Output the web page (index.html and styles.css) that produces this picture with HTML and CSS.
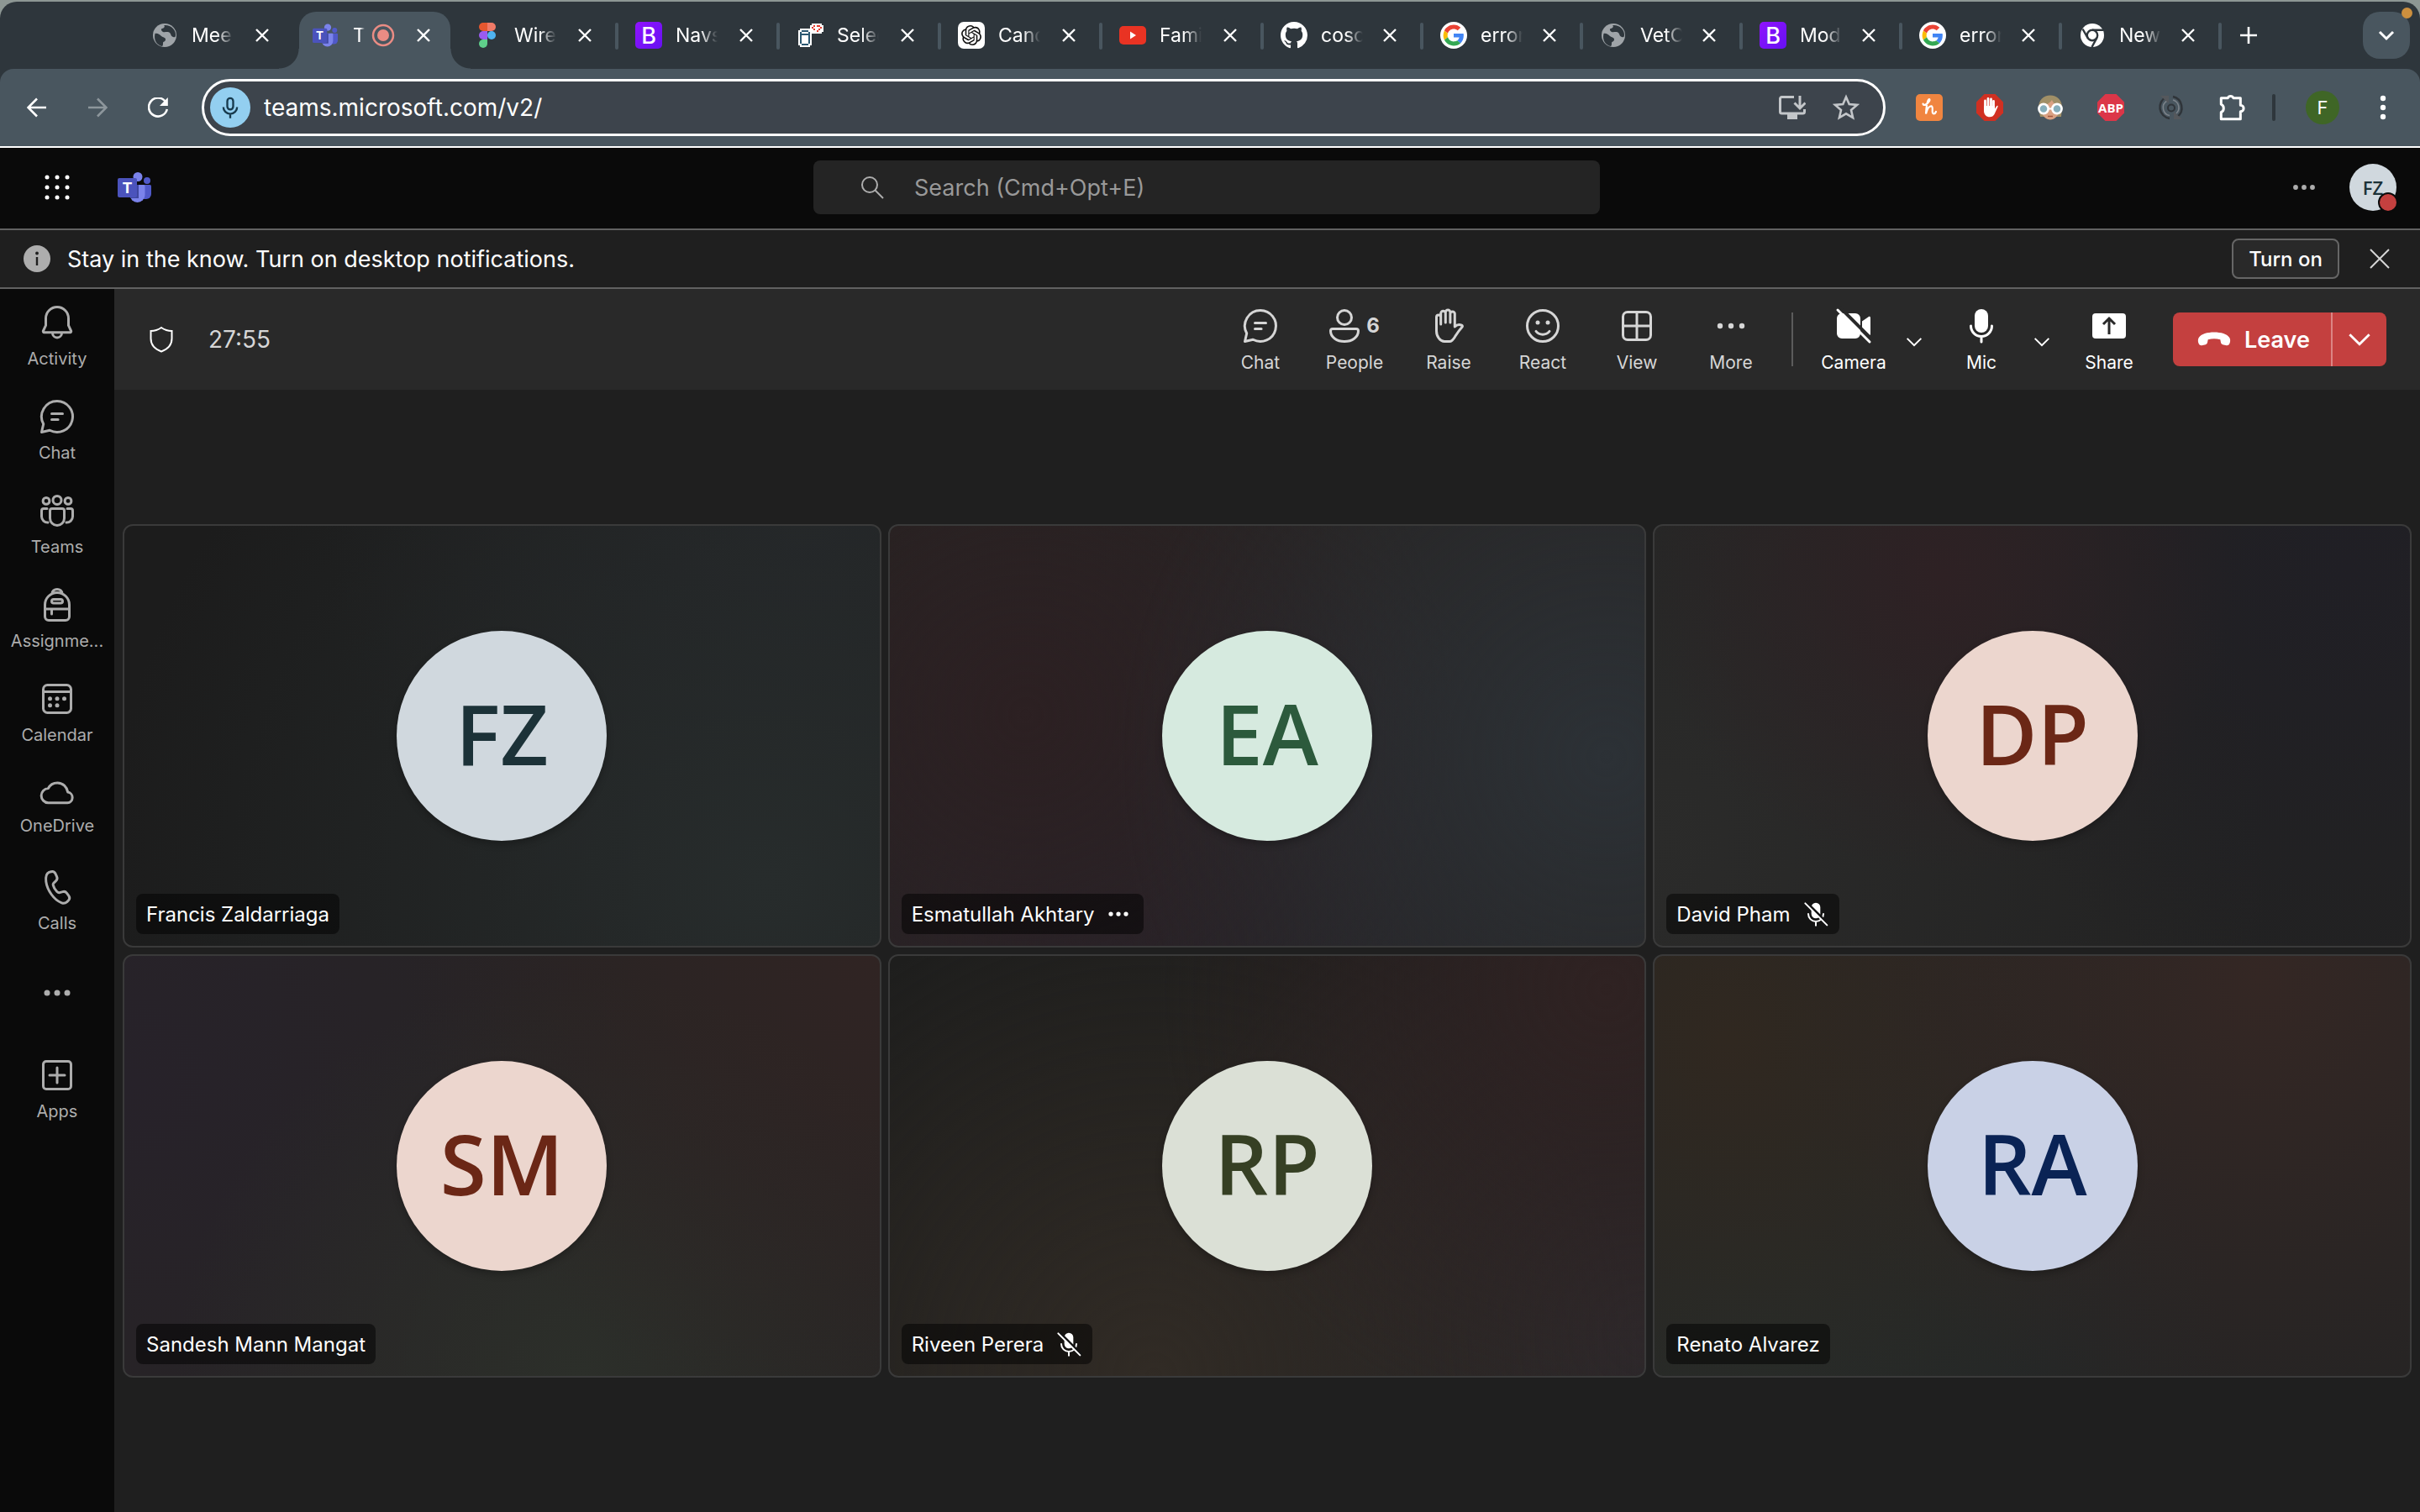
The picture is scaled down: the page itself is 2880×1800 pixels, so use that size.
FILE: index.html
```html
<!DOCTYPE html>
<html lang="en">
<head>
<meta charset="utf-8">
<title>Meeting | Microsoft Teams</title>
<link rel="stylesheet" href="styles.css">
</head>
<body>
<svg class="sprite" aria-hidden="true">
  <linearGradient id="bs" x1="0" y1="0" x2="1" y2="1"><stop offset="0" stop-color="#9013fe"/><stop offset="1" stop-color="#6610f2"/></linearGradient>
  <symbol id="x" viewBox="0 0 16 16"><path d="M1 1l14 14M15 1L1 15" fill="none" stroke="currentColor" stroke-width="2.4"/></symbol>
  <symbol id="x-thin" viewBox="0 0 24 24"><path d="M1 1l22 22M23 1L1 23" fill="none" stroke="currentColor" stroke-width="2"/></symbol>
  <symbol id="chev" viewBox="0 0 24 24"><path d="M2 7l10 10L22 7" fill="none" stroke="currentColor" stroke-width="2.4"/></symbol>
  <symbol id="dots" viewBox="0 0 24 24"><g fill="currentColor"><circle cx="6" cy="12" r="1.75"/><circle cx="12" cy="12" r="1.75"/><circle cx="18" cy="12" r="1.75"/></g></symbol>
  <symbol id="globe" viewBox="0 0 32 32"><circle cx="16" cy="16" r="14" fill="#9fa4a8"/><path d="M4.500 14C7 13 10 15 12 17s5 1 5 4-3 2-3 4 0 3-1 4C7 28 2.500 22 4.500 14zM15 4c2 1 0 4-2 4s-1 3 1 4 6-1 8 1 1 4 4 5 3-1 3-3C29 9 23 3 15 4z" fill="#2e363c"/></symbol>
  <symbol id="teams" viewBox="0 0 40 40"><circle cx="35" cy="12" r="4" fill="#5059c9"/><path d="M28 17h10.500a1.500 1.500 0 0 1 1.500 1.500V28a6 6 0 0 1-6 6h-6z" fill="#5059c9"/><circle cx="24" cy="7.500" r="5.500" fill="#7b83eb"/><path d="M16 17h15a1.500 1.500 0 0 1 1.500 1.500V29a9 9 0 0 1-18 0V18.500A1.500 1.500 0 0 1 16 17z" fill="#7b83eb"/><path d="M14.500 17H25v16H15.500a9 9 0 0 1-1-4z" fill="#3f479f"/><rect x="0" y="9" width="23" height="23" rx="2" fill="#4b53bc"/></symbol>
  <symbol id="google" viewBox="-7 -7 62 62"><circle cx="24" cy="24" r="31" fill="#fff"/><path fill="#ea4335" d="M24 9.500c3.540 0 6.710 1.220 9.210 3.600l6.850-6.850C35.900 2.380 30.470 0 24 0 14.620 0 6.510 5.380 2.560 13.220l7.980 6.190C12.430 13.720 17.740 9.500 24 9.500z"/><path fill="#4285f4" d="M46.980 24.550c0-1.570-.15-3.090-.38-4.550H24v9.020h12.940c-.58 2.960-2.260 5.480-4.780 7.180l7.730 6c4.510-4.180 7.090-10.360 7.090-17.650z"/><path fill="#fbbc05" d="M10.530 28.590c-.48-1.450-.76-2.990-.76-4.590s.27-3.140.76-4.590l-7.980-6.190C.92 16.460 0 20.120 0 24c0 3.880.92 7.540 2.560 10.780l7.970-6.190z"/><path fill="#34a853" d="M24 48c6.480 0 11.930-2.130 15.890-5.810l-7.730-6c-2.150 1.450-4.920 2.300-8.160 2.300-6.260 0-11.570-4.220-13.470-9.910l-7.980 6.190C6.510 42.620 14.620 48 24 48z"/></symbol>
  <symbol id="chat" viewBox="0 0 24 24"><path class="ln" d="M12 2.750a9.250 9.250 0 1 1-4.400 17.400L2.750 21.250l1.100-4.850A9.250 9.250 0 0 1 12 2.750zM8.750 10.250h6.500M8.750 13.750h3.800"/></symbol>
  <symbol id="mic-off" viewBox="0 0 24 24"><path d="M8 6a4 4 0 0 1 8 0v6a4 4 0 0 1-8 0z" fill="currentColor"/><path class="ln" d="M5.250 12a6.750 6.750 0 0 0 13.500 0M12 18.750v3.500"/><path d="M3.600 1.600l20 20" stroke="#141414" stroke-width="2.200"/><path class="ln" d="M2.500 2.500l19.500 19.500"/></symbol>
</svg>

<header class="browser">
  <div class="strip">
    <div class="tabs">
      <div class="tab"><svg class="fav"><use href="#globe"/></svg><span class="title">Mee</span><button class="close" aria-label="Close tab"><svg><use href="#x"/></svg></button></div>
      <div class="tab active"><svg class="fav" viewBox="0 0 40 40"><use href="#teams"/><text x="11.500" y="27" text-anchor="middle" font-size="18" font-weight="700" fill="#fff">T</text></svg><span class="title">T</span><svg class="rec" viewBox="0 0 28 28"><circle cx="14" cy="14" r="12" fill="none" stroke="#ea8c84" stroke-width="2.500"/><circle cx="14" cy="14" r="7" fill="#ea8c84"/></svg><button class="close" aria-label="Close tab"><svg><use href="#x"/></svg></button></div>
      <div class="tab"><svg class="fav" viewBox="0 0 32 32"><path d="M11 1h5v10h-5a5 5 0 0 1 0-10z" fill="#e5572f"/><path d="M16 1h5a5 5 0 0 1 0 10h-5z" fill="#f07a67"/><path d="M11 11h5v10h-5a5 5 0 0 1 0-10z" fill="#9a5bf0"/><circle cx="21" cy="16" r="5" fill="#4fb3f0"/><path d="M11 21h5v5a5 5 0 1 1-5-5z" fill="#5fcf8b"/></svg><span class="title">Wire</span><button class="close" aria-label="Close tab"><svg><use href="#x"/></svg></button></div>
      <div class="tab sep"><svg class="fav" viewBox="0 0 32 32"><rect width="32" height="32" rx="5" fill="url(#bs)"/><text x="16" y="26" text-anchor="middle" font-size="27" font-weight="500" fill="#fff">B</text></svg><span class="title">Navs</span><button class="close" aria-label="Close tab"><svg><use href="#x"/></svg></button></div>
      <div class="tab sep"><svg class="fav" viewBox="0 0 32 32" shape-rendering="crispEdges"><path d="M4 8h12v2h2v18h-2v2H4v-2H2V10h2z" fill="#fff"/><path d="M16 4h2V2h12v2h2v8h-2v2H18v-2h-2z" fill="#fff"/><path d="M6 10h8v2H6zM4 12h2v14H4zM14 12h2v14h-2zM6 14h8v2H6zM6 26h8v2H6z" fill="#2b5872"/><path d="M20 4h2v2h-2zM18 6h2v2h-2zM20 8h2v2h-2zM24 4h4v2h-4zM28 6h2v2h-2zM26 8h2v2h-2zM24 10h2v2h-2z" fill="#e23a2e"/></svg><span class="title">Selec</span><button class="close" aria-label="Close tab"><svg><use href="#x"/></svg></button></div>
      <div class="tab sep"><svg class="fav" viewBox="0 0 32 32"><rect width="32" height="32" rx="7" fill="#fff"/><path transform="translate(4 4)" fill="#111" d="M22.282 9.821a5.985 5.985 0 0 0-.516-4.910 6.046 6.046 0 0 0-6.510-2.900A6.065 6.065 0 0 0 4.981 4.182a5.985 5.985 0 0 0-3.998 2.900 6.046 6.046 0 0 0 .743 7.097 5.980 5.980 0 0 0 .511 4.911 6.051 6.051 0 0 0 6.515 2.900A5.985 5.985 0 0 0 13.260 24a6.056 6.056 0 0 0 5.772-4.206 5.989 5.989 0 0 0 3.998-2.900 6.056 6.056 0 0 0-.748-7.073zm-9.022 12.608a4.476 4.476 0 0 1-2.876-1.041l.142-.080 4.778-2.758a.795.795 0 0 0 .393-.681v-6.737l2.020 1.169a.071.071 0 0 1 .038.052v5.583a4.504 4.504 0 0 1-4.495 4.494zm-9.661-4.125a4.471 4.471 0 0 1-.535-3.014l.142.085 4.783 2.758a.771.771 0 0 0 .781 0l5.843-3.369v2.332a.080.080 0 0 1-.033.062L9.740 19.950a4.499 4.499 0 0 1-6.141-1.646zM2.341 7.896a4.485 4.485 0 0 1 2.366-1.973V11.600a.766.766 0 0 0 .388.677l5.814 3.354-2.020 1.169a.076.076 0 0 1-.071 0l-4.830-2.787A4.504 4.504 0 0 1 2.341 7.872zm16.596 3.856L13.104 8.364 15.119 7.200a.076.076 0 0 1 .071 0l4.830 2.791a4.494 4.494 0 0 1-.677 8.104v-5.677a.790.790 0 0 0-.407-.667zm2.011-3.023l-.142-.085-4.774-2.782a.776.776 0 0 0-.785 0L9.409 9.230V6.897a.066.066 0 0 1 .028-.062l4.830-2.787a4.499 4.499 0 0 1 6.680 4.660zM8.307 12.863l-2.020-1.164a.080.080 0 0 1-.038-.057V6.074a4.499 4.499 0 0 1 7.376-3.454l-.142.081L8.704 5.459a.795.795 0 0 0-.393.681zm1.098-2.365l2.602-1.500 2.607 1.500v2.999l-2.597 1.500-2.607-1.500z"/></svg><span class="title">Cand</span><button class="close" aria-label="Close tab"><svg><use href="#x"/></svg></button></div>
      <div class="tab sep"><svg class="fav" viewBox="0 0 32 32"><rect y="5" width="32" height="22" rx="5" fill="#e93323"/><path d="M13 11.500v9l7-4.500z" fill="#fff"/></svg><span class="title">Fami</span><button class="close" aria-label="Close tab"><svg><use href="#x"/></svg></button></div>
      <div class="tab narrow sep"><svg class="fav" viewBox="0 0 16 16"><path fill="#fff" d="M8 0C3.580 0 0 3.580 0 8c0 3.540 2.290 6.530 5.470 7.590.4.070.55-.17.55-.38 0-.19-.01-.82-.01-1.490-2.010.37-2.530-.49-2.690-.94-.09-.23-.48-.94-.82-1.130-.28-.15-.68-.52-.01-.53.63-.01 1.080.58 1.230.82.72 1.210 1.870.87 2.330.66.070-.52.28-.87.51-1.070-1.780-.2-3.640-.89-3.640-3.950 0-.87.31-1.590.82-2.150-.080-.2-.36-1.020.080-2.120 0 0 .67-.21 2.200.82.64-.18 1.320-.27 2-.27s1.360.090 2 .27c1.530-1.040 2.200-.82 2.200-.82.44 1.100.16 1.920.080 2.120.51.56.82 1.270.82 2.150 0 3.070-1.870 3.750-3.650 3.950.29.25.54.73.54 1.480 0 1.070-.010 1.930-.010 2.200 0 .21.15.46.55.38A8.010 8.010 0 0 0 16 8c0-4.420-3.580-8-8-8z"/></svg><span class="title">cosc</span><button class="close" aria-label="Close tab"><svg><use href="#x"/></svg></button></div>
      <div class="tab narrow sep"><svg class="fav"><use href="#google"/></svg><span class="title">error</span><button class="close" aria-label="Close tab"><svg><use href="#x"/></svg></button></div>
      <div class="tab narrow sep"><svg class="fav"><use href="#globe"/></svg><span class="title">VetC</span><button class="close" aria-label="Close tab"><svg><use href="#x"/></svg></button></div>
      <div class="tab narrow sep"><svg class="fav" viewBox="0 0 32 32"><rect width="32" height="32" rx="5" fill="url(#bs)"/><text x="16" y="26" text-anchor="middle" font-size="27" font-weight="500" fill="#fff">B</text></svg><span class="title">Mod</span><button class="close" aria-label="Close tab"><svg><use href="#x"/></svg></button></div>
      <div class="tab narrow sep"><svg class="fav"><use href="#google"/></svg><span class="title">error</span><button class="close" aria-label="Close tab"><svg><use href="#x"/></svg></button></div>
      <div class="tab narrow sep last"><svg class="fav" viewBox="0 0 32 32"><circle cx="16" cy="16" r="14" fill="#fff"/><circle cx="16" cy="16" r="6.200" fill="none" stroke="#2e363c" stroke-width="2.400"/><path d="M16 9.800h13M10.600 19.100L4.500 8.500M21.400 19.100L15.500 30" stroke="#2e363c" stroke-width="2.400"/></svg><span class="title">New</span><button class="close" aria-label="Close tab"><svg><use href="#x"/></svg></button></div>
    </div>
    <button class="newtab" aria-label="New tab"><svg viewBox="0 0 24 24"><path d="M12 2v20M2 12h20" stroke="currentColor" stroke-width="2.600"/></svg></button>
    <button class="tabsearch" aria-label="Search tabs"><svg viewBox="0 0 24 24"><path d="M4 8l8 8 8-8" fill="none" stroke="#fff" stroke-width="3"/></svg><span class="notice"></span></button>
  </div>

  <div class="toolbar">
    <button class="nav" aria-label="Back"><svg viewBox="0 0 24 24"><path d="M23 12H2M12 1.500L1.500 12 12 22.500" fill="none" stroke="#fff" stroke-width="2.600"/></svg></button>
    <button class="nav" aria-label="Forward"><svg viewBox="0 0 24 24"><path d="M1 12h21M12 1.500L22.500 12 12 22.500" fill="none" stroke="#8d969c" stroke-width="2.600"/></svg></button>
    <button class="nav" aria-label="Reload"><svg viewBox="0 0 24 24"><path d="M20.500 4.500A11 11 0 1 0 22.800 14" fill="none" stroke="#fff" stroke-width="2.600"/><path d="M23.800 0v10H14z" fill="#fff"/></svg></button>
    <div class="omnibox">
      <span class="micchip"><svg viewBox="0 0 24 24"><rect x="9" y="2.500" width="6" height="11.500" rx="3" fill="none" stroke="#173a4d" stroke-width="2"/><path d="M5 11.500a7 7 0 0 0 14 0M12 18.500V23" fill="none" stroke="#173a4d" stroke-width="2"/></svg></span>
      <input class="url" type="text" aria-label="Address" value="teams.microsoft.com/v2/">
      <button class="omni" aria-label="Install app"><svg viewBox="0 0 32 32"><path d="M18 3.500H3.500a2 2 0 0 0-2 2V21a2 2 0 0 0 2 2h25a2 2 0 0 0 2-2v-3M25 2v14M18.500 10.500l6.500 6.500 6.500-6.500" fill="none" stroke="#c3c6c9" stroke-width="3"/><path d="M10 24h12v6H10z" fill="#c3c6c9"/></svg></button>
      <button class="omni" aria-label="Bookmark"><svg viewBox="0 0 32 32"><path d="M16 3.500l3.700 8.600 9.300.8-7 6.100 2.100 9.100L16 23.300l-8.100 4.800L10 19l-7-6.100 9.300-.8z" fill="none" stroke="#c3c6c9" stroke-width="2.600"/></svg></button>
    </div>
    <div class="exts">
      <button aria-label="Honey"><svg viewBox="0 0 32 32"><rect width="32" height="32" rx="5" fill="#f08540"/><path d="M8.500 11.500c.5 3 5 1 7.500-3 1-2 .3-3-.8-2-1.700 2-2.700 9-3.200 17 1.500-6 4-9.500 6.500-9.200 3 .6-.3 8 2.200 9 1.600.4 2.700-.8 3.300-2.300" fill="none" stroke="#fff" stroke-width="2.200" stroke-linecap="round"/></svg></button>
      <button aria-label="AdBlock"><svg viewBox="0 0 32 32"><path d="M9.500 0h13L32 9.500v13L22.500 32h-13L0 22.500v-13z" fill="#d03022"/><path d="M10.500 16V8M14 15V5.500M17.500 15V6M20.500 16V8.500" stroke="#fff" stroke-width="2.800" stroke-linecap="round"/><path d="M9 14h13v3.500l2-3c1-1.200 2-.6 1.500.7L21.500 24c-1 2-3 3.300-5.500 3.300-4 0-7-2.800-7-7.300z" fill="#fff"/></svg></button>
      <button aria-label="Extension"><svg viewBox="0 0 32 32"><path d="M2 16C2 7 8 1.500 16 1.500S30 7 30 16l-1 11H4z" fill="#a08f67"/><path d="M6 14c6-1 10-4 12-7 1 3 4 6 8 7v6c0 6-5 10.500-10 10.500S6 26 6 20z" fill="#d9a183"/><circle cx="8" cy="17.500" r="5.600" fill="#86aebb" stroke="#fff" stroke-width="2.600"/><circle cx="24" cy="17.500" r="5.600" fill="#86aebb" stroke="#fff" stroke-width="2.600"/><path d="M13.500 17.500h5" stroke="#fff" stroke-width="2"/><path d="M13 26.500h6" stroke="#a5583f" stroke-width="1.500"/></svg></button>
      <button aria-label="Adblock Plus"><svg viewBox="0 0 32 32"><path d="M9.500 0h13L32 9.500v13L22.500 32h-13L0 22.500v-13z" fill="#dc3648"/><text class="abp" x="16" y="21.500" text-anchor="middle" font-size="15" font-weight="700" fill="#fff">ABP</text></svg></button>
      <button aria-label="Extension"><svg viewBox="0 0 32 32" fill="none"><path d="M10 3.500A13.500 13.500 0 0 0 14 29M18 3a13.500 13.500 0 0 1 5 24" stroke="#2f3439" stroke-width="2.400"/><path d="M11 8a9.500 9.500 0 0 0 3 17.500M18 7a9.500 9.500 0 0 1 4 16" stroke="#7c838a" stroke-width="1.500"/><path d="M3 2h10v9zM29 30H19v-9z" fill="#55585c"/><circle cx="16" cy="16.500" r="4" stroke="#2f3439" stroke-width="2"/></svg></button>
      <button aria-label="Extensions"><svg viewBox="0 0 34 34"><path d="M3.500 5h8.500a3.800 3.800 0 0 1 7 0h9v9a4 4 0 0 1 0 8v9.500H3.500V23a5.500 5.500 0 0 0 0-10z" fill="none" stroke="#fff" stroke-width="3.200" stroke-linejoin="round"/></svg></button>
      <span class="bar"></span>
      <button class="profile" aria-label="Profile">F</button>
      <button aria-label="Menu"><svg viewBox="0 0 32 32"><g fill="#fff"><circle cx="16" cy="5" r="3.200"/><circle cx="16" cy="16" r="3.200"/><circle cx="16" cy="27" r="3.200"/></g></svg></button>
    </div>
  </div>
</header>

<header class="apphead">
  <div class="brand">
    <button class="waffle" aria-label="App launcher"><svg viewBox="0 0 32 32"><g fill="#fff"><circle cx="4" cy="4" r="2.500"/><circle cx="16" cy="4" r="2.500"/><circle cx="28" cy="4" r="2.500"/><circle cx="4" cy="16" r="2.500"/><circle cx="16" cy="16" r="2.500"/><circle cx="28" cy="16" r="2.500"/><circle cx="4" cy="28" r="2.500"/><circle cx="16" cy="28" r="2.500"/><circle cx="28" cy="28" r="2.500"/></g></svg></button>
    <svg class="logo" viewBox="0 0 40 40"><use href="#teams"/><text x="11.500" y="27" text-anchor="middle" font-size="18" font-weight="700" fill="#fff">T</text></svg>
  </div>
  <label class="search"><svg viewBox="0 0 28 28"><circle cx="11" cy="11" r="9" fill="none" stroke="#adadad" stroke-width="2"/><path d="M17.500 17.500L27 27" stroke="#adadad" stroke-width="2"/></svg><input type="search" aria-label="Search" placeholder="Search (Cmd+Opt+E)"></label>
  <div class="account">
    <button class="more" aria-label="Settings and more"><svg><use href="#dots"/></svg></button>
    <button class="me" aria-label="Account">FZ<span class="presence"></span></button>
  </div>
</header>

<div class="banner">
  <svg class="info" viewBox="0 0 32 32"><circle cx="16" cy="16" r="16" fill="#adadad"/><path d="M16 14v10" stroke="#1f1f1f" stroke-width="2.400"/><circle cx="16" cy="9.500" r="1.900" fill="#1f1f1f"/></svg>
  <p>Stay in the know. Turn on desktop notifications.</p>
  <button class="turnon">Turn on</button>
  <button class="dismiss" aria-label="Dismiss"><svg><use href="#x-thin"/></svg></button>
</div>

<div class="app">
  <nav class="rail">
    <a href="#activity"><svg viewBox="0 0 24 24"><path class="ln" d="M12 2.750A6.750 6.750 0 0 0 5.250 9.500v4.200L3.700 17a.600.600 0 0 0 .55.85h15.500a.600.600 0 0 0 .55-.85l-1.550-3.300V9.500A6.750 6.750 0 0 0 12 2.750zM9.250 18.200a2.750 2.750 0 0 0 5.500 0"/></svg>Activity</a>
    <a href="#chat-list"><svg><use href="#chat"/></svg>Chat</a>
    <a href="#teams-list"><svg viewBox="0 0 24 24"><g class="ln"><circle cx="12" cy="5.700" r="2.500"/><circle cx="5.500" cy="6.200" r="1.950"/><circle cx="18.500" cy="6.200" r="1.950"/><path d="M9 10.750h6c.7 0 1.250.55 1.250 1.250v4.500a4.250 4.250 0 0 1-8.500 0V12c0-.7.55-1.250 1.250-1.250zM6 10.750H4c-.7 0-1.250.55-1.250 1.250v3.500A3.600 3.600 0 0 0 6.500 19M18 10.750h2c.7 0 1.250.55 1.250 1.250v3.500A3.600 3.600 0 0 1 17.500 19"/></g></svg>Teams</a>
    <a href="#assignments"><svg viewBox="0 0 24 24"><g class="ln"><path d="M4.750 12a7.250 7.250 0 0 1 14.500 0v7A2.250 2.250 0 0 1 17 21.250H7A2.250 2.250 0 0 1 4.750 19zM9 5.300a3 2.600 0 0 1 6 0M4.750 14.500h14.500M8.750 14.500v3"/><rect x="8.750" y="8.700" width="6.500" height="2.300" rx="1.150"/></g></svg>Assignme...</a>
    <a href="#calendar"><svg viewBox="0 0 24 24"><path class="ln" d="M6.250 3.750h11.500a2.500 2.500 0 0 1 2.500 2.500v11.500a2.500 2.500 0 0 1-2.500 2.500H6.250a2.500 2.500 0 0 1-2.500-2.500V6.250a2.500 2.500 0 0 1 2.500-2.500zM3.750 7.750h16.500"/><g fill="currentColor"><circle cx="7.750" cy="11.900" r="1.250"/><circle cx="12" cy="11.900" r="1.250"/><circle cx="16.250" cy="11.900" r="1.250"/><circle cx="7.750" cy="15.900" r="1.250"/><circle cx="12" cy="15.900" r="1.250"/></g></svg>Calendar</a>
    <a href="#onedrive" class="tight"><svg viewBox="0 0 24 24"><path class="ln" d="M6.700 17.900h11.400a3.200 3.200 0 0 0 .300-6.350c-.600-3.200-3-5.600-6.200-5.600-2.500 0-4.500 1.300-5.500 3.300a4.330 4.330 0 0 0 0 8.650z"/></svg>OneDrive</a>
    <a href="#calls"><svg viewBox="0 0 24 24"><path class="ln" d="M7.200 3.200l1.200-.35a2.200 2.200 0 0 1 2.600 1.200l.8 1.800a2.200 2.200 0 0 1-.5 2.500L9.900 9.700c-.3.300-.4.700-.3 1.100.3 1.300 1.200 2.800 2.200 3.800.6.600 1.100.9 1.700.7l1.800-.5a2.200 2.200 0 0 1 2.400.8l1.200 1.600a2.200 2.200 0 0 1-.2 2.800l-.8.800c-.9.800-2.100 1-3.200.6-4.600-1.600-8.600-7.600-9.300-12.600-.3-2.500.2-4.900 1.800-5.600z"/></svg>Calls</a>
    <button aria-label="More apps"><svg><use href="#dots"/></svg></button>
    <a href="#apps"><svg viewBox="0 0 24 24"><path class="ln" d="M5.500 3.750h13a1.750 1.750 0 0 1 1.750 1.750v13a1.750 1.750 0 0 1-1.750 1.750h-13a1.750 1.750 0 0 1-1.750-1.750v-13A1.750 1.750 0 0 1 5.500 3.750zM12 7.500v9M7.500 12h9"/></svg>Apps</a>
  </nav>

  <main class="meeting">
    <div class="controls">
      <svg class="shield" viewBox="0 0 28 32"><path d="M14 2c3.500 2.500 7.500 4 12.500 4v9c0 7.500-4.500 12.500-12.500 15.500C6 27.500 1.500 22.500 1.500 15V6C6.500 6 10.500 4.500 14 2z" fill="none" stroke="#fff" stroke-width="2"/></svg>
      <span class="clock">27:55</span>
      <div class="group">
        <button><svg><use href="#chat"/></svg>Chat</button>
        <button><span class="count"><svg class="person" viewBox="0 0 18 24"><path class="ln" d="M9 2.750a4.250 4.250 0 1 1 0 8.500 4.250 4.250 0 0 1 0-8.500zM2 13.750h14c.7 0 1.250.55 1.250 1.250 0 3.600-3.600 6.250-8.250 6.250S.75 18.600.75 15c0-.7.55-1.250 1.250-1.250z"/></svg>6</span>People</button>
        <button><svg viewBox="0 0 24 24"><path class="ln" d="M4.750 15V6.750a1.300 1.300 0 0 1 2.600 0V11M7.350 10.500V4.500a1.400 1.400 0 0 1 2.800 0V10M10.150 10V3.900a1.400 1.400 0 0 1 2.800 0V10M12.950 10V4.800a1.350 1.350 0 0 1 2.700 0v7.700c1.200-1.300 2.600-1.500 4.100-.9.500.2.600.6.300 1-1.900 2-3 3.700-4.200 5.700-.9 1.500-1.700 2.950-3.300 2.950H9.500c-2.600 0-4.750-3-4.750-6.300"/></svg>Raise</button>
        <button><svg viewBox="0 0 24 24"><path class="ln" d="M12 2.750a9.250 9.250 0 1 1 0 18.500 9.250 9.250 0 0 1 0-18.500zM8 15.200a5.200 5.200 0 0 0 8 0"/><circle cx="9" cy="10" r="1.250" fill="currentColor"/><circle cx="15" cy="10" r="1.250" fill="currentColor"/></svg>React</button>
        <button><svg viewBox="0 0 24 24"><path class="ln" d="M6.500 3.750h11a2.750 2.750 0 0 1 2.750 2.750v11a2.750 2.750 0 0 1-2.750 2.750h-11a2.750 2.750 0 0 1-2.750-2.750v-11A2.750 2.750 0 0 1 6.500 3.750zM12 3.750v16.500M3.750 12h16.500"/></svg>View</button>
        <button><svg viewBox="0 0 24 24"><g fill="currentColor"><circle cx="5.500" cy="12" r="1.600"/><circle cx="12" cy="12" r="1.600"/><circle cx="18.500" cy="12" r="1.600"/></g></svg>More</button>
      </div>
      <span class="divider"></span>
      <div class="devices">
        <button class="dev"><svg viewBox="0 0 24 24"><path d="M5 4.500h8a3 3 0 0 1 3 3v9a3 3 0 0 1-3 3H5a3 3 0 0 1-3-3v-9a3 3 0 0 1 3-3zM17 9.300l3.800-2.700c.6-.4 1.200-.1 1.200.6v9.600c0 .7-.6 1-1.200.6L17 14.700z" fill="currentColor"/><path d="M3.800.9l19 19" stroke="#292929" stroke-width="2"/><path class="ln" d="M2.500 2.500l19 19"/></svg>Camera</button>
        <button class="caret" aria-label="Camera options"><svg><use href="#chev"/></svg></button>
        <button class="dev"><svg viewBox="0 0 24 24"><rect x="8" y="2" width="8" height="14" rx="4" fill="currentColor"/><path class="ln" d="M5.750 12a6.250 6.250 0 0 0 12.500 0M12 18.300v3.200"/></svg>Mic</button>
        <button class="caret" aria-label="Mic options"><svg><use href="#chev"/></svg></button>
        <button class="dev"><svg viewBox="0 0 24 24"><rect x="2" y="4.500" width="20" height="15" rx="2" fill="currentColor"/><path d="M12 17V8M8.500 11L12 7.500l3.500 3.500" fill="none" stroke="#292929" stroke-width="1.500"/></svg>Share</button>
      </div>
      <div class="leave">
        <button class="hang"><svg viewBox="0 0 40 24"><path d="M20 3.500c8 0 15.500 2 18.300 6.500 1.500 2.500.8 5.600-.2 7.600-.6 1.200-2 1.900-3.400 1.600l-4.500-1c-1.200-.3-2-1.200-2.200-2.400l-.7-3.600c-4.800-1.400-9.800-1.400-14.600 0l-.7 3.600c-.2 1.200-1 2.100-2.200 2.400l-4.500 1c-1.400.3-2.800-.4-3.400-1.600-1-2-1.700-5.100-.2-7.600C4.500 5.500 12 3.500 20 3.500z" fill="#fff"/></svg>Leave</button>
        <button class="hangmore" aria-label="Leave options"><svg><use href="#chev"/></svg></button>
      </div>
    </div>

    <div class="stage">
      <div class="grid">
        <section class="tile t1"><div class="avatar">FZ</div><div class="name">Francis Zaldarriaga</div></section>
        <section class="tile t2"><div class="avatar">EA</div><div class="name">Esmatullah Akhtary<svg class="opts"><use href="#dots"/></svg></div></section>
        <section class="tile t3"><div class="avatar">DP</div><div class="name">David Pham<svg><use href="#mic-off"/></svg></div></section>
        <section class="tile t4"><div class="avatar">SM</div><div class="name">Sandesh Mann Mangat</div></section>
        <section class="tile t5"><div class="avatar">RP</div><div class="name">Riveen Perera<svg><use href="#mic-off"/></svg></div></section>
        <section class="tile t6"><div class="avatar">RA</div><div class="name">Renato Alvarez</div></section>
      </div>
    </div>
  </main>
</div>
</body>
</html>
```
FILE: styles.css
```css
* { box-sizing: border-box; }
body {
  margin: 0;
  min-height: 100vh;
  display: flex;
  flex-direction: column;
  background: #1f1f1f;
  color: #fff;
  font-family: Inter, "Liberation Sans", sans-serif;
}
button {
  margin: 0;
  padding: 0;
  border: 0;
  background: none;
  color: inherit;
  font: inherit;
}
input {
  border: 0;
  padding: 0;
  background: none;
  color: inherit;
  font: inherit;
  outline: 0;
}
p { margin: 0; }
svg { display: block; flex: none; }
.sprite { position: absolute; width: 0; height: 0; }
.ln {
  fill: none;
  stroke: currentColor;
  stroke-width: 1.5;
  stroke-linecap: round;
  stroke-linejoin: round;
}

/* browser window */
.browser {
  padding-top: 2px;
  border-bottom: 2px solid #fff;
  background: linear-gradient(#8d9794 24px, #2e363c 24px);
}
.strip {
  display: flex;
  height: 80px;
  padding: 12px 12px 0 158px;
  background: #2e363c;
  border-radius: 20px 20px 0 0;
}
.tabs { display: flex; }
.tab {
  position: relative;
  display: flex;
  align-items: center;
  width: 192px;
  height: 68px;
  padding: 0 30px 12px 22px;
  font-size: 23px;
}
.tab.narrow { width: 190px; }
.tab.sep::before,
.tab.last::after {
  content: "";
  position: absolute;
  left: -2px;
  top: 13px;
  width: 4px;
  height: 32px;
  border-radius: 2px;
  background: #49565f;
}
.tab.last::after { left: auto; right: -2px; }
.fav { width: 32px; height: 32px; }
.active .fav { width: 30px; height: 30px; margin-right: 2px; }
.title {
  width: 50px;
  margin-left: 16px;
  overflow: hidden;
  white-space: nowrap;
  -webkit-mask-image: linear-gradient(90deg, #000 60%, transparent);
  mask-image: linear-gradient(90deg, #000 60%, transparent);
}
.close { margin-left: auto; }
.close svg { width: 16px; height: 16px; }
.active {
  margin: 0 6px;
  width: 180px;
  padding: 0 24px 12px 16px;
  background: #49565f;
  border-radius: 20px 20px 0 0;
}
.active::before,
.active::after {
  content: "";
  position: absolute;
  bottom: 0;
  width: 24px;
  height: 24px;
  background: radial-gradient(circle at 0 0, transparent 23px, #49565f 24px);
}
.active::before { left: -24px; }
.active::after { right: -24px; background: radial-gradient(circle at 100% 0, transparent 23px, #49565f 24px); }
.active .title { width: 14px; }
.rec { width: 28px; height: 28px; margin-left: 8px; }
.newtab { margin-left: 22px; height: 56px; }
.newtab svg { width: 24px; height: 24px; }
.tabsearch {
  position: relative;
  display: grid;
  place-items: center;
  width: 56px;
  height: 56px;
  margin-left: auto;
  border-radius: 20px;
  background: #49565f;
}
.tabsearch svg { width: 24px; height: 24px; }
.notice {
  position: absolute;
  top: -5px;
  right: -3px;
  width: 13px;
  height: 13px;
  border-radius: 50%;
  background: #cc8f3e;
}

.toolbar {
  display: flex;
  align-items: center;
  height: 92px;
  padding: 0 28px 0 20px;
  background: #49565f;
  border-radius: 16px 16px 0 0;
}
.nav { display: grid; place-items: center; width: 48px; height: 48px; margin-right: 24px; }
.nav svg { width: 24px; height: 24px; }
.omnibox {
  flex: 1;
  display: flex;
  align-items: center;
  gap: 32px;
  height: 68px;
  margin-left: 4px;
  padding: 0 28px 0 7px;
  border: 3px solid #fff;
  border-radius: 34px;
  background: #3d444c;
}
.micchip {
  display: grid;
  place-items: center;
  width: 48px;
  height: 48px;
  border-radius: 50%;
  background: #93cff0;
}
.micchip svg { width: 28px; height: 28px; }
.url { flex: 1; margin-left: -16px; font-size: 28px; height: 56px; }
.omni svg { width: 32px; height: 32px; }
.exts { display: flex; align-items: center; gap: 40px; margin-left: 36px; }
.exts svg { width: 32px; height: 32px; }
.abp { font-family: "Open Sans", sans-serif; }
.bar { width: 4px; height: 32px; margin-left: -8px; border-radius: 2px; background: #2e363c; }
.profile {
  width: 40px;
  height: 40px;
  margin: 0 -6px 0 -4px;
  border-radius: 50%;
  background: #3f6626;
  font-size: 22px;
}
.profile + button { margin-left: 2px; }

/* Teams header */
.apphead {
  display: grid;
  grid-template-columns: 1fr 936px 1fr;
  align-items: center;
  height: 96px;
  padding: 0 8px 2px 0;
  background: #0a0a0a;
}
.brand { display: flex; align-items: center; gap: 56px; padding-left: 52px; }
.waffle svg { width: 32px; height: 32px; }
.logo { width: 40px; height: 40px; }
.search {
  display: flex;
  align-items: center;
  gap: 36px;
  height: 64px;
  padding: 0 56px;
  border-radius: 8px;
  background: #242424;
  font-size: 27px;
}
.search svg { width: 28px; height: 28px; }
.search input { flex: 1; min-width: 0; }
.search input::placeholder { color: #999; opacity: 1; }
.account { display: flex; justify-content: flex-end; align-items: center; gap: 34px; padding-right: 20px; }
.more { color: #adadad; }
.more svg { width: 40px; height: 40px; }
.me {
  position: relative;
  width: 56px;
  height: 56px;
  border-radius: 50%;
  background: #d0d8de;
  color: #1c3238;
  font: 600 22px "Open Sans", sans-serif;
}
.presence {
  position: absolute;
  right: -2px;
  bottom: -2px;
  width: 24px;
  height: 24px;
  border: 2px solid #0a0a0a;
  border-radius: 50%;
  background: #c4403f;
}

/* notification banner */
.banner {
  display: flex;
  align-items: center;
  height: 72px;
  padding: 0 36px 0 28px;
  border-top: 2px solid #616161;
  border-bottom: 2px solid #616161;
  background: #1f1f1f;
}
.info { width: 32px; height: 32px; }
.banner p { flex: 1; margin-left: 20px; font-size: 27px; }
.turnon {
  width: 128px;
  height: 48px;
  border: 2px solid #666;
  border-radius: 8px;
  background: #292929;
  font-size: 24px;
  font-weight: 500;
}
.dismiss { margin-left: 36px; color: #d6d6d6; }
.dismiss svg { width: 24px; height: 24px; }

/* app body */
.app { flex: 1; display: flex; }
.rail { width: 136px; background: #0a0a0a; color: #adadad; }
.rail a,
.rail button {
  display: flex;
  flex-direction: column;
  align-items: center;
  width: 100%;
  height: 112px;
  padding-top: 16px;
  gap: 7px;
  color: inherit;
  font-size: 20px;
  line-height: 24px;
  text-decoration: none;
  white-space: nowrap;
}
.rail .tight { gap: 3px; }
.rail button { padding-top: 30px; }
.rail svg { width: 48px; height: 48px; }
.meeting { flex: 1; min-width: 0; display: flex; flex-direction: column; }
.controls {
  display: flex;
  align-items: center;
  height: 120px;
  padding: 0 40px 0 42px;
  background: #292929;
  color: #d6d6d6;
}
.shield { width: 28px; height: 32px; }
.clock { margin-left: 42px; font-size: 28px; }
.group { display: flex; margin-left: auto; }
.group button,
.dev {
  display: flex;
  flex-direction: column;
  align-items: center;
  gap: 8px;
  width: 112px;
  font-size: 21px;
  line-height: 24px;
}
.group svg,
.dev svg { width: 48px; height: 48px; }
.count { display: flex; align-items: center; gap: 8px; font-size: 24px; font-weight: 700; }
.group .person { width: 36px; }
.divider { width: 2px; height: 64px; margin: 0 16px; background: #5c5c5c; }
.devices { display: flex; align-items: center; color: #fff; }
.caret { width: 40px; padding: 6px 8px 0 0; display: grid; place-items: center; }
.caret svg { width: 20px; height: 20px; }
.leave {
  display: flex;
  height: 64px;
  margin-left: 20px;
  border-radius: 8px;
  background: #c4403f;
  color: #fff;
}
.hang {
  display: flex;
  align-items: center;
  justify-content: center;
  gap: 16px;
  width: 190px;
  padding-left: 4px;
  border-right: 2px solid #dc8584;
  font-size: 27px;
  font-weight: 600;
}
.hang svg { width: 40px; height: 24px; }
.hangmore { width: 64px; display: grid; place-items: center; }
.hangmore svg { width: 28px; height: 28px; }

/* participants */
.stage { flex: 1; display: flex; flex-direction: column; justify-content: center; padding: 0 10px; }
.grid { display: grid; grid-template-columns: repeat(3, 1fr); grid-auto-rows: 504px; gap: 8px; }
.tile {
  display: grid;
  grid-template: 1fr / 1fr;
  border: 2px solid #3a3a3a;
  border-radius: 12px;
}
.avatar,
.name { grid-area: 1 / 1; }
.avatar {
  place-self: center;
  display: grid;
  place-items: center;
  width: 250px;
  height: 250px;
  padding-bottom: 8px;
  border-radius: 50%;
  box-shadow: 0 4px 8px rgba(0, 0, 0, .25);
  font: 600 100px/120px "Open Sans", sans-serif;
}
.name {
  place-self: end start;
  display: flex;
  align-items: center;
  gap: 14px;
  height: 48px;
  margin: 14px;
  padding: 0 12px;
  border-radius: 8px;
  background: rgba(0, 0, 0, .5);
  font-size: 24px;
}
.name svg { width: 32px; height: 32px; }
.name .opts { width: 36px; height: 36px; margin-left: -4px; }
.t1 { background: radial-gradient(circle at 85% 85%, #272c2c, transparent 90%), radial-gradient(circle at 90% 0, #232427, transparent 60%), #1c1c1c; }
.t2 { background: radial-gradient(circle at 95% 55%, #2c3136, transparent 65%), radial-gradient(circle at 18% 45%, #2c2022, transparent 65%), radial-gradient(circle at 30% 100%, #27232a, transparent 70%), #262322; }
.t3 { background: radial-gradient(circle at 38% 12%, #2e2124, transparent 50%), radial-gradient(circle at 92% 10%, #201f25, transparent 55%), radial-gradient(circle at 0 75%, #2b2b2a, transparent 75%), #222222; }
.t4 { background: radial-gradient(circle at 100% 0, #302423, transparent 55%), radial-gradient(circle at 60% 100%, #2c2f2a, transparent 65%), radial-gradient(circle at 0 30%, #27222a, transparent 65%), #272424; }
.t5 { background: radial-gradient(circle at 95% 8%, #2f2222, transparent 55%), radial-gradient(circle at 35% 100%, #312b25, transparent 75%), radial-gradient(circle at 100% 90%, #2d292c, transparent 60%), #1e1e1d; }
.t6 { background: radial-gradient(circle at 80% 5%, #342724, transparent 65%), radial-gradient(circle at 10% 20%, #302820, transparent 60%), radial-gradient(circle at 15% 95%, #252c2b, transparent 60%), #252424; }
.t1 .avatar { background: #d0d8de; color: #1c3238; }
.t2 .avatar { background: #d6eadf; color: #2c5a3c; }
.t3 .avatar { background: #ecd6ce; color: #6b2716; }
.t4 .avatar { background: #ecd6ce; color: #6b2716; }
.t5 .avatar { background: #dbe0d6; color: #364024; }
.t6 .avatar { background: #c9d1e6; color: #0a2355; }
```
